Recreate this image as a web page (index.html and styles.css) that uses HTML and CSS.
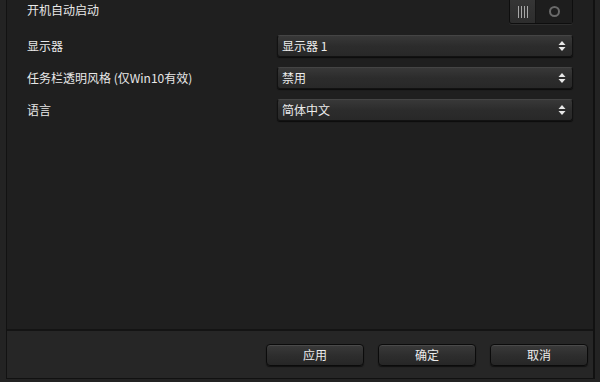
FILE: index.html
```html
<!DOCTYPE html>
<html>
<head>
<meta charset="utf-8">
<link rel="stylesheet" href="styles.css">
</head>
<body>
<div class="window">
  <div class="frame">
    <div class="panel">
      <div class="row row-first">
        <span class="label">开机自动启动</span>
        <div class="toggle">
          <div class="toggle-on"><span class="bars"></span></div>
          <div class="toggle-off"><span class="ring"></span></div>
        </div>
      </div>
      <div class="row">
        <span class="label">显示器</span>
        <div class="select"><span>显示器 1</span><svg class="arrows" width="8" height="12" viewBox="0 0 8 12"><path d="M4 1L7.5 5H0.5Z" fill="#e8e8e8"/><path d="M4 11L7.5 7H0.5Z" fill="#e8e8e8"/></svg></div>
      </div>
      <div class="row">
        <span class="label">任务栏透明风格 (仅Win10有效)</span>
        <div class="select"><span>禁用</span><svg class="arrows" width="8" height="12" viewBox="0 0 8 12"><path d="M4 1L7.5 5H0.5Z" fill="#e8e8e8"/><path d="M4 11L7.5 7H0.5Z" fill="#e8e8e8"/></svg></div>
      </div>
      <div class="row">
        <span class="label">语言</span>
        <div class="select"><span>简体中文</span><svg class="arrows" width="8" height="12" viewBox="0 0 8 12"><path d="M4 1L7.5 5H0.5Z" fill="#e8e8e8"/><path d="M4 11L7.5 7H0.5Z" fill="#e8e8e8"/></svg></div>
      </div>
    </div>
    <div class="footer">
      <button class="btn">应用</button>
      <button class="btn">确定</button>
      <button class="btn">取消</button>
    </div>
  </div>
</div>
</body>
</html>
```
FILE: styles.css
```css
html, body {
  margin: 0;
  padding: 0;
  width: 600px;
  height: 382px;
  overflow: hidden;
  background: #222222;
  font-family: "Noto Sans CJK SC", "Noto Sans", sans-serif;
  color: #e6e6e6;
}
.window {
  box-sizing: border-box;
  width: 600px;
  height: 382px;
  padding: 0 5px 3px 6px;
  background: #232323;
}
.frame {
  box-sizing: border-box;
  height: 379px;
  border-left: 1px solid #121212;
  border-right: 2px solid #111111;
  border-bottom: 1px solid #111111;
  display: flex;
  flex-direction: column;
  background: #262626;
}
.panel {
  box-sizing: border-box;
  height: 331px;
  background: #1f1f1f;
  border-bottom: 2px solid #141414;
  padding: 0 20px 0 20px;
  display: flex;
  flex-direction: column;
}
.row {
  display: flex;
  align-items: center;
  justify-content: space-between;
  height: 21px;
  margin-top: 11px;
}
.row-first {
  height: 24px;
  margin-top: 0;
  align-items: flex-start;
}
.row-first .label {
  margin-top: 2px;
}
.label {
  font-size: 12px;
  line-height: 16px;
  color: #e8e8e8;
}
.toggle {
  box-sizing: border-box;
  width: 64px;
  height: 24px;
  border: 1px solid #0e0e0e;
  border-top: none;
  border-radius: 0 0 3px 3px;
  background: #202020;
  display: flex;
  box-shadow: 0 1px 0 #2e2e2e;
}
.toggle-on {
  width: 25px;
  background: linear-gradient(#353535, #2d2d2d);
  display: flex;
  align-items: center;
  justify-content: center;
  border-right: 1px solid #161616;
  border-radius: 0 0 0 2px;
}
.bars {
  width: 10px;
  height: 12px;
  background: repeating-linear-gradient(90deg, #a8a8a8 0 1px, transparent 1px 3px);
}
.toggle-off {
  flex: 1;
  display: flex;
  align-items: center;
  justify-content: center;
  background: #1d1d1d;
}
.ring {
  width: 7px;
  height: 7px;
  border: 2px solid #6a6a6a;
  border-radius: 50%;
}
.select {
  box-sizing: border-box;
  width: 296px;
  height: 22px;
  border-radius: 3px;
  background: linear-gradient(#383838, #2c2c2c 50%, #282828);
  border: 1px solid #121212;
  border-top-color: #444;
  box-shadow: 0 1px 1px #0c0c0c;
  display: flex;
  align-items: center;
  justify-content: space-between;
  padding: 0 6px 0 4px;
  font-size: 12px;
  color: #ececec;
}
.arrows {
  display: block;
}
.footer {
  flex: 1;
  display: flex;
  justify-content: flex-end;
  align-items: flex-start;
  gap: 14px;
  padding: 13px 5px 0 0;
  background: #262626;
}
.btn {
  box-sizing: border-box;
  width: 98px;
  height: 22px;
  border-radius: 4px;
  border: 1px solid #0b0b0b;
  background: linear-gradient(#3a3a3a, #2e2e2e 50%, #262626);
  box-shadow: inset 0 1px 0 #4a4a4a, 0 1px 1px #111;
  color: #ececec;
  font-family: "Noto Sans CJK SC", sans-serif;
  font-size: 12px;
  padding: 0;
  line-height: 18px;
}
```
